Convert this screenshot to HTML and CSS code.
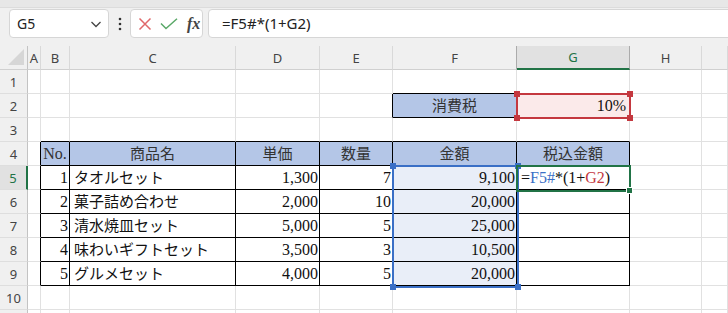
FILE: index.html
```html
<!DOCTYPE html>
<html>
<head>
    <title>消費税の計算</title>
    <link rel="stylesheet" href="styles.css">
</head>
<body>
    <div class="topstrip"></div>
    <div class="bar">
        <div class="namebox">
            <span>G5</span>
            <svg class="chev" width="12" height="8" viewBox="0 0 12 8"><path d="M1.5 2 L6 6.5 L10.5 2" fill="none" stroke="#444" stroke-width="1.3"/></svg>
        </div>
        <div class="dots">
            <svg width="4" height="14" viewBox="0 0 4 14"><circle cx="2" cy="2" r="1.3" fill="#333"/><circle cx="2" cy="7" r="1.3" fill="#333"/><circle cx="2" cy="12" r="1.3" fill="#333"/></svg>
        </div>
        <div class="fxbox">
            <svg width="14" height="14" viewBox="0 0 14 14"><path d="M1.5 1.5 L12.5 12.5 M12.5 1.5 L1.5 12.5" stroke="#e0686a" stroke-width="1.5" fill="none"/></svg>
            <svg width="18" height="12" viewBox="0 0 18 12"><path d="M1 5.5 L6 10.5 L17 0.8" stroke="#5aa868" stroke-width="1.5" fill="none"/></svg>
            <span class="fx">fx</span>
        </div>
        <div class="formula">=F5#*(1+G2)</div>
    </div>

    <div class="sheet">
        <table class="grid">
            <colgroup>
                <col style="width:28px"><col style="width:13px"><col style="width:29px"><col style="width:166px"><col style="width:84px">
                <col style="width:73px"><col style="width:124px"><col style="width:113px"><col style="width:72px"><col style="width:26px">
            </colgroup>
            <tr>
                <th class="corner"><svg width="18" height="18" viewBox="0 0 18 18"><path d="M17 1 L17 17 L1 17 Z" fill="#d6d6d6"/></svg></th>
                <th class="ch">A</th><th class="ch">B</th><th class="ch">C</th><th class="ch">D</th><th class="ch">E</th>
                <th class="ch pre">F</th><th class="ch on">G</th><th class="ch">H</th><th class="ch"></th>
            </tr>
            <tr>
                <th class="rh">1</th><td></td><td></td><td></td><td></td><td></td><td class="bb"></td><td></td><td></td><td></td>
            </tr>
            <tr>
                <th class="rh">2</th><td></td><td></td><td></td><td></td><td class="br"></td>
                <td class="c hd jp br bb">消費税</td><td class="c num pink">10%</td><td></td><td></td>
            </tr>
            <tr>
                <th class="rh">3</th><td></td><td class="bb"></td><td class="bb"></td><td class="bb"></td><td class="bb"></td><td class="bb"></td><td class="bb"></td><td></td><td></td>
            </tr>
            <tr>
                <th class="rh">4</th><td class="br"></td>
                <td class="c hd br bb">No.</td><td class="c hd jp br bb">商品名</td><td class="c hd jp br bb">単価</td>
                <td class="c hd jp br bb">数量</td><td class="c hd jp br bb">金額</td><td class="c hd jp br bb">税込金額</td><td></td><td></td>
            </tr>
            <tr>
                <th class="rh on">5</th><td class="br"></td>
                <td class="c num br bb">1</td><td class="c jp br bb">タオルセット</td><td class="c num br bb">1,300</td>
                <td class="c num br bb">7</td><td class="c num sel br bb">9,100</td>
                <td class="c br bb">=<span class="blue">F5#</span>*(1+<span class="red">G2</span>)</td><td></td><td></td>
            </tr>
            <tr>
                <th class="rh">6</th><td class="br"></td>
                <td class="c num br bb">2</td><td class="c jp br bb">菓子詰め合わせ</td><td class="c num br bb">2,000</td>
                <td class="c num br bb">10</td><td class="c num sel br bb">20,000</td><td class="br bb"></td><td></td><td></td>
            </tr>
            <tr>
                <th class="rh">7</th><td class="br"></td>
                <td class="c num br bb">3</td><td class="c jp br bb">清水焼皿セット</td><td class="c num br bb">5,000</td>
                <td class="c num br bb">5</td><td class="c num sel br bb">25,000</td><td class="br bb"></td><td></td><td></td>
            </tr>
            <tr>
                <th class="rh">8</th><td class="br"></td>
                <td class="c num br bb">4</td><td class="c jp br bb">味わいギフトセット</td><td class="c num br bb">3,500</td>
                <td class="c num br bb">3</td><td class="c num sel br bb">10,500</td><td class="br bb"></td><td></td><td></td>
            </tr>
            <tr>
                <th class="rh">9</th><td class="br"></td>
                <td class="c num br bb">5</td><td class="c jp br bb">グルメセット</td><td class="c num br bb">4,000</td>
                <td class="c num br bb">5</td><td class="c num sel br bb">20,000</td><td class="br bb"></td><td></td><td></td>
            </tr>
            <tr>
                <th class="rh">10</th><td></td><td></td><td></td><td></td><td></td><td></td><td></td><td></td><td></td>
            </tr>
            <tr>
                <th class="rh"></th><td></td><td></td><td></td><td></td><td></td><td></td><td></td><td></td><td></td>
            </tr>
        </table>

        <!-- range highlights drawn over the grid -->
        <div class="ref ref-red">
            <i class="k tl"></i><i class="k tr"></i><i class="k bl"></i><i class="k brc"></i>
        </div>
        <div class="ref ref-blue">
            <i class="k tl"></i><i class="k tr"></i><i class="k bl"></i><i class="k brc"></i>
        </div>
        <div class="active">
            <i class="handle"></i>
        </div>
    </div>
</body>
</html>
```

FILE: styles.css
```css
body {
    margin: 0;
    width: 728px;
    height: 313px;
    overflow: hidden;
    background: #fff;
    font-family: "Noto Sans", "Liberation Sans", sans-serif;
}
.topstrip {
    height: 7px;
    background: #e7e7e7;
    border-bottom: 1px solid #dcdcdc;
}
.bar {
    display: flex;
    align-items: center;
    height: 38px;
    padding: 1px 0 8px 9px;
    box-sizing: border-box;
    background: #f0f0f0;
}
.namebox {
    display: flex;
    align-items: center;
    justify-content: space-between;
    width: 100px;
    height: 29px;
    box-sizing: border-box;
    padding: 0 6px 0 7px;
    background: #fff;
    border: 1px solid #d6d6d6;
    border-radius: 4px;
    font-size: 14px;
    color: #222;
}
.dots {
    width: 21px;
    display: flex;
    justify-content: center;
    align-items: center;
}
.fxbox {
    display: flex;
    align-items: center;
    gap: 8px;
    width: 73px;
    height: 29px;
    box-sizing: border-box;
    padding-left: 7px;
    background: #fff;
    border: 1px solid #d6d6d6;
    border-radius: 4px;
}
.fx {
    font-family: "Liberation Serif", serif;
    font-style: italic;
    font-weight: bold;
    font-size: 16px;
    color: #444;
    margin-left: 1px;
}
.formula {
    flex: 1;
    height: 29px;
    margin-left: 5px;
    margin-right: -8px;
    box-sizing: border-box;
    padding-left: 13px;
    line-height: 27px;
    background: #fff;
    border: 1px solid #d6d6d6;
    border-radius: 4px;
    font-size: 15px;
    color: #222;
}
.sheet {
    position: relative;
    background: #f0f0f0;
}
.grid {
    border-spacing: 0;
    table-layout: fixed;
    width: 728px;
    background: #fff;
}
.grid tr {
    height: 24px;
}
.grid td, .grid th {
    padding: 0;
    box-sizing: border-box;
    height: 24px;
    border-right: 1px solid #e1e1e1;
    border-bottom: 1px solid #e1e1e1;
}
.grid th {
    font-weight: normal;
    font-size: 13px;
    color: #444;
    background: #f0f0f0;
}
.grid th.ch {
    border-right: 1px solid #d9d9d9;
    border-bottom: 1px solid #d0d0d0;
}
.grid th.ch.pre {
    border-right-color: #ababab;
}
.grid th.ch.on {
    background: #e1e1e1;
    color: #217346;
    border-right-color: #ababab;
    border-bottom: 2px solid #217346;
}
.grid th.corner {
    border-right: 1px solid #c3c3c3;
    border-bottom: 1px solid #d0d0d0;
    text-align: right;
    vertical-align: bottom;
    padding: 0 2px 3px 0;
}
.grid th.corner svg {
    display: block;
    margin-left: auto;
}
.grid th.rh {
    text-align: center;
    border-right: 1px solid #c3c3c3;
    border-bottom: 1px solid #dedede;
}
.grid th.rh.on {
    background: #e1e1e1;
    color: #217346;
    border-right: 2px solid #217346;
}
.grid td.c {
    font-family: "Liberation Serif", "Noto Sans CJK JP", serif;
    font-size: 16px;
    line-height: 20px;
    color: #111;
    padding: 0 1px 0 4px;
    white-space: nowrap;
    overflow: hidden;
}
.grid td.jp {
    font-size: 15px;
}
.grid td.num {
    text-align: right;
}
.grid td.hd {
    background: #b4c6e7;
    text-align: center;
    color: #333;
    padding: 0;
}
.grid td.pink {
    background: #fbeaea;
    padding-right: 3px;
}
.grid td.sel {
    background: #e9eef8;
}
.grid td.br {
    border-right-color: #000;
}
.grid td.bb {
    border-bottom-color: #000;
}
.blue {
    color: #3a6fc6;
}
.red {
    color: #c4383f;
}
.ref, .active {
    position: absolute;
    box-sizing: border-box;
    border: 2px solid;
}
.ref-red {
    left: 516px;
    top: 47px;
    width: 115px;
    height: 26px;
    border-color: #c4383f;
    color: #c4383f;
}
.ref-blue {
    left: 392px;
    top: 119px;
    width: 127px;
    height: 123px;
    border-color: #3a6fc6;
    color: #3a6fc6;
}
.k {
    position: absolute;
    width: 6px;
    height: 6px;
    background: currentColor;
}
.k.tl { left: -4px; top: -4px; }
.k.tr { right: -4px; top: -4px; }
.k.bl { left: -4px; bottom: -4px; }
.k.brc { right: -4px; bottom: -4px; }
.active {
    left: 516px;
    top: 119px;
    width: 115px;
    height: 27px;
    border-color: #217346;
}
.handle {
    position: absolute;
    right: -4px;
    bottom: -4px;
    width: 5px;
    height: 5px;
    background: #217346;
    border: 1px solid #fff;
}
```
